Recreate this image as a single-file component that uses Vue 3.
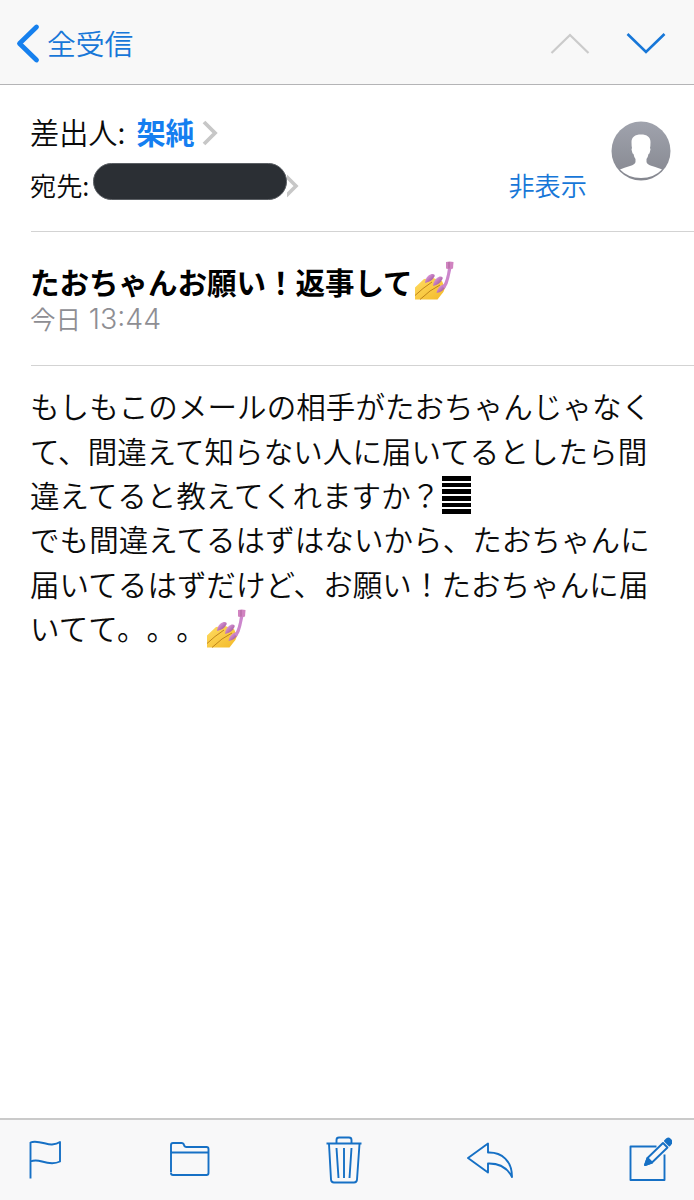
<script setup>
import { ref } from 'vue'

const sender = ref('架純')
const subject = ref('たおちゃんお願い！返事して')
const showDetail = ref(true)

const firstLines = [
  'もしもこのメールの相手がたおちゃんじゃなく',
  'て、間違えて知らない人に届いてるとしたら間',
]
const lastLines = [
  'でも間違えてるはずはないから、たおちゃんに',
  '届いてるはずだけど、お願い！たおちゃんに届',
]
</script>

<template>
  <div class="mail">
    <!-- マニキュアの絵文字 -->
    <svg class="defs" width="0" height="0" aria-hidden="true">
      <defs>
        <linearGradient id="skin" x1="0" y1="0" x2="1" y2="1">
          <stop offset="0" stop-color="#ffdc62" />
          <stop offset="1" stop-color="#f3b928" />
        </linearGradient>
        <linearGradient id="polish" x1="0" y1="0" x2="1" y2="1">
          <stop offset="0.300" stop-color="#d48fd2" />
          <stop offset="1" stop-color="#8a3f80" />
        </linearGradient>
        <symbol id="nail" viewBox="0 0 39 39">
          <path d="M0 26.500 9 18 18 17 27 20 30 27Q29 31 26 34L22.500 38.500H0Z" fill="url(#skin)" />
          <path d="M0 34.500 8 27.500 17 21M5 38.500 15 30 25 24" fill="none" stroke="#b97d16" stroke-width="0.900" />
          <path d="M10 22Q10.500 15 16.500 13Q20.500 12.500 19.500 15.500Q17 20.500 10 22Z" fill="url(#polish)" />
          <path d="M18 25Q18.500 18 24.500 15.500Q28.500 15 27.500 18Q25 23.500 18 25Z" fill="url(#polish)" />
          <path d="M21.500 32Q22.500 25.500 28 23.500Q31.500 23 30.500 26Q28 31 21.500 32Z" fill="url(#polish)" />
          <path d="M33 7 36.500 7 34.300 17Q33 23.500 30 27.500L27.500 25.500Q31.500 19 33 7Z" fill="#cc86cc" />
          <path d="M31 1Q34.500 0 38.500 1L38 7.500Q34.500 8.500 31 7.500Z" fill="#d083c0" />
          <path d="M34 1V7.500" stroke="#ab639b" stroke-width="1" />
        </symbol>
      </defs>
    </svg>

    <header class="navbar">
      <button class="back" type="button">
        <svg width="26" height="42" viewBox="0 0 26 42" fill="none" aria-hidden="true">
          <path d="M22.500 4 5.500 20.500 22.500 37" stroke="#1680ee" stroke-width="4.800" stroke-linecap="round" stroke-linejoin="round" />
        </svg>
        <span>全受信</span>
      </button>
      <div class="pager">
        <button type="button" aria-label="前のメール">
          <svg width="40" height="24" viewBox="0 0 40 24" fill="none" aria-hidden="true">
            <path d="M1.500 21 20 3 38.500 21" stroke="#cbcbcb" stroke-width="2.200" />
          </svg>
        </button>
        <button type="button" aria-label="次のメール">
          <svg width="40" height="24" viewBox="0 0 40 24" fill="none" aria-hidden="true">
            <path d="M1.500 2 20 20 38.500 2" stroke="#1777d8" stroke-width="2.600" />
          </svg>
        </button>
      </div>
    </header>

    <main class="content">
      <section class="addresses">
        <div class="people">
          <div class="row from">
            <span>差出人:</span>
            <a class="name">{{ sender }}</a>
            <svg width="16" height="26" viewBox="0 0 16 26" fill="none" aria-hidden="true">
              <path d="M2 2 13 13 2 24" stroke="#c7c7c7" stroke-width="3.800" />
            </svg>
          </div>
          <div class="row to">
            <span>宛先:</span>
            <span class="masked"></span>
            <svg width="12" height="24" viewBox="0 0 12 24" fill="none" aria-hidden="true">
              <path d="M-1 2 9 12 -1 22" stroke="#c7c7c7" stroke-width="3.600" />
            </svg>
            <button class="toggle" type="button" @click="showDetail = !showDetail">
              {{ showDetail ? '非表示' : '詳細' }}
            </button>
          </div>
        </div>
        <svg class="avatar" width="60" height="60" viewBox="0 0 60 60" aria-hidden="true">
          <defs>
            <linearGradient id="avatarBg" x1="0" y1="0" x2="0" y2="1">
              <stop offset="0" stop-color="#a0a3ad" />
              <stop offset="1" stop-color="#85878f" />
            </linearGradient>
          </defs>
          <circle cx="30" cy="30" r="29.500" fill="url(#avatarBg)" />
          <path
            d="M30 13.500C36 13.500 39.500 16 39.500 21Q39.500 25 39 27Q40 27.500 39 30.500Q38.500 33 37.500 33Q37 36 35.500 38V41Q36 43.500 41 45Q48 47 51 48.500Q43 57 30 57Q17 57 9 48.500Q13 46.500 19 45Q24 43.500 24.500 41V38Q23 36 22.500 33Q21.500 33 21 30.500Q20 27.500 21 27Q20.500 25 20.500 21C20.500 16 24 13.500 30 13.500Z"
            fill="#fff"
          />
        </svg>
      </section>

      <section class="heading">
        <h1>{{ subject }}<svg class="emoji" width="39" height="39"><use href="#nail" /></svg></h1>
        <p class="date">今日 <span>13:44</span></p>
      </section>

      <article class="body">
        <p v-for="line in firstLines" :key="line">{{ line }}</p>
        <p>違えてると教えてくれますか？<i class="bars"></i></p>
        <p v-for="line in lastLines" :key="line">{{ line }}</p>
        <p>いてて。。。<svg class="emoji" width="39" height="39"><use href="#nail" /></svg></p>
      </article>
    </main>

    <footer class="toolbar">
      <button type="button" aria-label="フラグ">
        <svg width="36" height="42" viewBox="0 0 36 42" aria-hidden="true">
          <path d="M3.500 39.500V3.500C10 0.500 20 6 25 5.500Q30 5 33 3V22.500C27 25.500 20 24 15 22.500Q8 20.500 3.500 22.500" />
        </svg>
      </button>
      <button class="folder" type="button" aria-label="フォルダ">
        <svg width="42" height="38" viewBox="0 0 42 38" aria-hidden="true">
          <path d="M2 31.500V4Q2 2 4 2H12.500Q14.500 2 15 4Q15.500 6 17.500 6H37.500Q39.500 6 39.500 8V32Q39.500 34 37.500 34H4Q2 34 2 32M2 11.500H39.500" />
        </svg>
      </button>
      <button class="trash" type="button" aria-label="ゴミ箱">
        <svg width="38" height="50" viewBox="0 0 38 50" aria-hidden="true">
          <path d="M1.500 8.500H36.500M11.500 8V5Q11.500 2.500 14 2.500H24Q26.500 2.500 26.500 5V8M4 9 6 44.500Q6.200 47.500 9 47.500H29Q31.800 47.500 32 44.500L34.500 9M11.500 13 13.500 43M19 13V43M26.500 13 24.500 43" />
        </svg>
      </button>
      <button class="reply" type="button" aria-label="返信">
        <svg width="48" height="38" viewBox="0 0 48 38" aria-hidden="true">
          <path d="M2 17 22 2.500V11.500C36 11 46 20 46 36Q39 22 22 22.500V31.500Z" />
        </svg>
      </button>
      <button class="compose" type="button" aria-label="新規作成">
        <svg width="46" height="46" viewBox="0 0 46 46" aria-hidden="true">
          <path d="M30.500 10.500H4.500V44H38.500V18.500" />
          <path d="M19 29 21.500 22 37 7 41.500 11.500 26 26.500Z" />
          <path class="tip" d="M19 29 21.500 22 26 26.500Z" />
          <path class="tip" d="M39 5 41 3Q42.500 2 44 3.500L45 4.500Q46 6 45 7.500L43.500 9.500Z" />
        </svg>
      </button>
    </footer>
  </div>
</template>

<style>
body {
  margin: 0;
  background: #fff;
}
</style>

<style scoped>
.mail {
  width: 694px;
  height: 1200px;
  display: flex;
  flex-direction: column;
  overflow: hidden;
  background: #fff;
  color: #0a0a0a;
  font-family: 'Noto Sans CJK JP', sans-serif;
  font-weight: 350;
  text-spacing-trim: space-all;
}

.defs {
  position: absolute;
}

svg {
  display: block;
  flex: none;
}

button {
  border: none;
  padding: 0;
  background: transparent;
  color: #1777d8;
  font: inherit;
  cursor: pointer;
}

h1,
p {
  margin: 0;
}

.navbar {
  box-sizing: border-box;
  height: 85px;
  padding: 3px 28px 0 14px;
  display: flex;
  align-items: center;
  justify-content: space-between;
  border-bottom: 1px solid #b4b4b6;
  background: #f8f8f8;
}

.back {
  display: flex;
  align-items: center;
  gap: 7px;
  font-size: 28.800px;
  line-height: 40px;
}

.back span {
  margin-top: -2px;
}

.pager {
  display: flex;
  gap: 36px;
}

.content {
  flex: 1;
}

.addresses {
  box-sizing: border-box;
  height: 147px;
  margin-left: 31px;
  padding: 24px 23px 0 0;
  display: flex;
  gap: 24px;
  border-bottom: 1px solid #d3d3d3;
}

.people {
  flex: 1;
  margin-left: -1px;
}

.row {
  display: flex;
  align-items: center;
}

.from {
  height: 48px;
  font-size: 29.200px;
}

.from span,
.name {
  margin-top: -4px;
}

.name {
  margin-right: 7px;
  margin-left: 11px;
  color: #147ef0;
  font-weight: 700;
}

.to {
  height: 56px;
  font-size: 26.200px;
}

.to svg {
  margin-top: 1px;
}

.masked {
  box-sizing: border-box;
  width: 194px;
  height: 37px;
  margin: 0 0 8px 4px;
  border: 1px solid #5b5f64;
  border-radius: 19px;
  background: #2b2f34;
}

.toggle {
  margin-left: auto;
}

.avatar {
  margin-top: 12px;
}

.heading {
  box-sizing: border-box;
  height: 134px;
  margin-left: 31px;
  padding-top: 28px;
  border-bottom: 1px solid #d3d3d3;
}

h1 {
  display: flex;
  align-items: center;
  height: 41px;
  margin-left: -1px;
  color: #000;
  font-size: 29.500px;
  font-weight: 700;
  line-height: 40px;
}

h1 .emoji {
  margin-left: 2px;
}

.date {
  margin: -1px 0 0 -1px;
  color: #8e8e93;
  font-size: 25.500px;
  line-height: 36px;
}

.date span {
  margin-left: 2px;
  font-family: Inter, 'Liberation Sans', sans-serif;
  font-size: 28.500px;
}

.body {
  margin-left: 30px;
  padding-top: 17px;
  font-size: 29.500px;
  letter-spacing: 0.080px;
}

.body p {
  height: 44.400px;
  display: flex;
  align-items: center;
  white-space: nowrap;
}

.body .emoji {
  margin: 3px 0 0 1px;
}

/* 表示できない絵文字の代わりの横縞 */
.bars {
  width: 29px;
  height: 38px;
  margin: 3px 0 0 2px;
  background: repeating-linear-gradient(#000 0, #000 4.600px, #fff 4.600px, #fff 6.700px);
}

.toolbar {
  box-sizing: border-box;
  height: 82px;
  padding: 0 21px 0 27px;
  display: flex;
  align-items: center;
  justify-content: space-between;
  border-top: 2px solid #cacaca;
  background: #f8f8f9;
}

.toolbar svg {
  fill: none;
  stroke: #1670c5;
  stroke-width: 1.900;
  stroke-linejoin: round;
}

.toolbar .tip {
  fill: #1670c5;
}

.folder {
  margin: 0 3px 0 -3px;
}

.trash {
  margin: 0 -2px 0 2px;
}

.reply {
  margin: 0 4px 0 -4px;
}

.compose {
  margin: -3px 1px 0 -1px;
}
</style>
